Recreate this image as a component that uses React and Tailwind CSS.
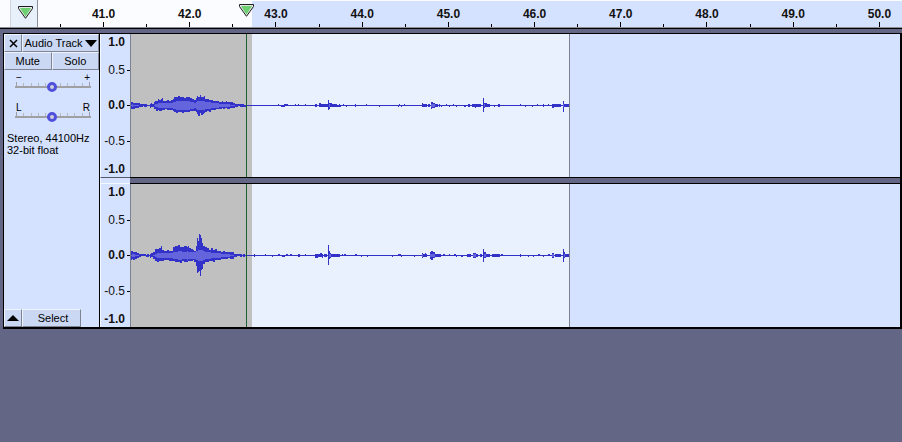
import React, { useState } from "react";

const SECONDS = [41, 42, 43, 44, 45, 46, 47, 48, 49, 50];

// [x, peak up, peak down, rms], each entry holds until the next one
const LEFT_ENVELOPE = [
  [0, 3, 3, 1], [1, 3, 3, 2], [2, 2, 3, 1], [4, 2, 2, 1], [8, 2, 1, 0], [9, 1, 1, 0],
  [12, 1, 0, 0], [13, 1, 1, 0], [16, 0, 0, 0], [19, 1, 2, 0], [20, 2, 1, 0], [21, 1, 1, 0],
  [23, 3, 3, 1], [24, 4, 3, 2], [25, 4, 5, 2], [27, 6, 4, 3], [28, 5, 5, 3], [30, 6, 5, 3],
  [31, 7, 4, 3], [32, 4, 4, 3], [34, 4, 3, 3], [36, 5, 4, 3], [38, 4, 4, 3], [40, 5, 4, 3],
  [42, 6, 5, 4], [43, 8, 6, 4], [45, 8, 7, 5], [47, 9, 6, 5], [49, 8, 6, 5], [51, 8, 7, 5],
  [53, 7, 6, 5], [55, 8, 6, 5], [59, 7, 5, 4], [61, 6, 5, 4], [63, 5, 5, 3], [65, 7, 6, 4],
  [66, 9, 8, 5], [67, 8, 10, 5], [69, 10, 7, 5], [70, 8, 9, 5], [72, 8, 8, 5], [73, 9, 7, 5],
  [74, 6, 6, 4], [76, 6, 5, 4], [78, 5, 6, 4], [80, 5, 4, 3], [82, 4, 4, 3], [85, 4, 3, 3],
  [88, 3, 3, 2], [91, 4, 2, 2], [92, 3, 3, 2], [94, 3, 2, 2], [95, 4, 2, 2], [96, 3, 3, 2],
  [99, 3, 2, 1], [102, 2, 2, 1], [104, 1, 1, 0], [107, 1, 0, 0], [109, 1, 1, 0], [113, 0, 1, 0],
  [115, 0, 0, 0],
];

const RIGHT_ENVELOPE = [
  [0, 4, 4, 1], [1, 4, 3, 2], [2, 3, 4, 2], [4, 3, 3, 1], [6, 2, 2, 1], [8, 1, 1, 0],
  [10, 1, 0, 0], [15, 0, 1, 0], [16, 1, 1, 0], [18, 0, 0, 0], [19, 1, 2, 0], [20, 2, 1, 0],
  [22, 3, 3, 1], [24, 6, 5, 2], [26, 6, 6, 3], [28, 7, 5, 3], [30, 9, 5, 3], [31, 5, 5, 3],
  [33, 4, 4, 3], [36, 5, 4, 3], [38, 4, 5, 3], [42, 8, 5, 4], [44, 9, 6, 4], [47, 10, 6, 5],
  [49, 8, 7, 5], [51, 8, 5, 4], [53, 9, 6, 4], [56, 8, 6, 5], [57, 9, 5, 4], [58, 7, 5, 4],
  [60, 6, 5, 4], [62, 5, 4, 4], [63, 4, 6, 4], [65, 9, 10, 5], [66, 17, 17, 5], [67, 14, 16, 6],
  [68, 21, 15, 6], [69, 20, 20, 6], [70, 17, 14, 6], [71, 12, 13, 6], [72, 9, 8, 5], [74, 8, 6, 4],
  [76, 7, 6, 4], [78, 5, 5, 4], [80, 7, 5, 3], [82, 5, 6, 3], [84, 6, 4, 3], [86, 4, 4, 3],
  [90, 3, 3, 2], [92, 4, 3, 2], [94, 3, 3, 2], [97, 3, 2, 2], [99, 3, 3, 1], [103, 1, 1, 0],
  [106, 1, 0, 0], [109, 1, 1, 0], [111, 0, 0, 0], [112, 1, 1, 0], [114, 0, 0, 0],
];

// [x, width, up, down]
const LEFT_BLIPS = [
  [147, 1, 1, 0], [150, 4, 0, 1], [153, 4, 1, 0], [164, 1, 1, 0], [167, 1, 1, 0], [174, 1, 1, 0],
  [184, 2, 1, 1], [188, 2, 2, 1], [190, 7, 1, 1], [195, 2, 1, 1], [197, 1, 5, 4], [198, 1, 2, 3],
  [199, 2, 2, 1], [201, 5, 1, 1], [206, 4, 0, 1], [208, 1, 1, 1], [212, 1, 1, 0], [215, 1, 0, 1],
  [224, 1, 1, 1], [235, 1, 1, 0], [248, 1, 0, 1], [267, 1, 0, 1], [268, 1, 1, 0], [270, 1, 0, 1],
  [273, 1, 1, 0], [291, 1, 2, 1], [292, 4, 1, 1], [297, 2, 1, 1], [300, 1, 3, 3], [301, 1, 3, 2],
  [302, 2, 2, 2], [304, 3, 1, 1], [308, 1, 1, 1], [310, 1, 0, 1], [315, 1, 1, 0], [318, 1, 0, 1],
  [322, 1, 1, 0], [325, 1, 0, 1], [333, 2, 0, 1], [337, 2, 1, 1], [341, 9, 1, 1], [344, 1, 1, 2],
  [352, 1, 7, 6], [353, 1, 2, 2], [354, 2, 2, 1], [356, 3, 1, 1], [363, 1, 0, 1], [367, 2, 1, 1],
  [389, 1, 1, 0], [394, 1, 0, 1], [401, 1, 0, 1], [406, 1, 1, 0], [412, 1, 1, 1], [417, 1, 1, 0],
  [421, 2, 1, 2], [423, 7, 1, 1], [432, 1, 4, 6], [433, 5, 1, 1],
];

const RIGHT_BLIPS = [
  [123, 1, 1, 1], [134, 1, 1, 0], [141, 1, 0, 1], [147, 2, 1, 0], [151, 3, 0, 1], [155, 2, 1, 0],
  [159, 2, 1, 0], [167, 2, 1, 1], [174, 1, 1, 0], [184, 3, 1, 2], [187, 2, 1, 1], [189, 2, 2, 1],
  [191, 1, 1, 2], [193, 3, 1, 1], [197, 1, 10, 9], [198, 1, 4, 3], [199, 1, 2, 2], [200, 9, 1, 1],
  [211, 1, 1, 0], [213, 2, 1, 0], [224, 2, 1, 0], [230, 1, 0, 1], [236, 1, 0, 1], [261, 1, 0, 1],
  [267, 3, 1, 0], [270, 1, 0, 1], [283, 1, 0, 1], [291, 1, 2, 2], [292, 4, 1, 1], [294, 1, 2, 1],
  [299, 1, 3, 3], [300, 2, 4, 4], [302, 2, 3, 2], [304, 6, 1, 1], [312, 2, 1, 0], [318, 1, 1, 0],
  [323, 2, 1, 0], [325, 1, 0, 1], [330, 2, 0, 1], [336, 4, 1, 1], [342, 3, 2, 2], [345, 2, 1, 1],
  [349, 2, 1, 1], [352, 1, 6, 6], [353, 2, 3, 2], [355, 4, 1, 1], [361, 8, 1, 1], [370, 2, 1, 0],
  [389, 1, 1, 1], [397, 1, 0, 1], [402, 1, 0, 1], [407, 2, 1, 0], [412, 1, 0, 1], [417, 2, 1, 0],
  [421, 2, 2, 2], [424, 6, 1, 1], [432, 1, 6, 6], [433, 1, 3, 2], [434, 4, 1, 1],
];

const RULER_LABELS = [
  { text: "1.0", style: "font-bold", tick: "bg-transparent" },
  { text: "0.5", style: "mt-3", tick: "bg-black" },
  { text: "0.0", style: "font-bold mt-[19px]", tick: "bg-black" },
  { text: "-0.5", style: "mt-5", tick: "bg-black" },
  { text: "-1.0", style: "font-bold mt-3", tick: "bg-transparent" },
];

const BEVEL =
  "bg-[#cbd8f4] border border-t-[#eef4ff] border-l-[#eef4ff] border-r-[#7f8494] border-b-[#7f8494] flex items-center justify-center text-[11px] leading-none text-black";

function Marker() {
  return (
    <svg width="15" height="13" viewBox="0 0 15 13" className="block">
      <path
        d="M0.5 0.5H14.5V2.5L7.5 12.3L0.5 2.5Z"
        fill="#e4e8e4"
        stroke="#1c1c1c"
      />
      <path d="M2 2H13L7.5 10.5Z" fill="#6cd070" />
    </svg>
  );
}

function TimeRuler() {
  return (
    <header className="relative flex h-[29px] overflow-hidden border-b border-black bg-[#d5e2ff]">
      <div className="flex w-[252px] shrink-0 border-b border-[#8c8f98] bg-[#fafcff]">
        <button
          type="button"
          aria-label="Pinned play head"
          className="ml-[10px] flex w-7 justify-center border-x border-l-[#d0d4dc] border-r-[#8c8f98] bg-[#e8f1fb] pt-[6px] pl-[2px]"
        >
          <Marker />
        </button>
      </div>
      <div className="grow border-t border-b border-t-[#fafcff] border-b-[#8c8f98]" />

      {/* the scale and the play head lie over the selected range */}
      <div className="absolute top-0 left-[60px] grid h-[27px] w-[862px] grid-cols-10">
        {SECONDS.map((second) => (
          <div key={second} className="flex items-end">
            <span className="h-[3px] w-px bg-black" />
            <div className="flex grow flex-col items-center">
              <span className="text-xs leading-4 font-bold text-[#111]">
                {second}.0
              </span>
              <span className="h-[5px] w-px bg-black" />
            </div>
          </div>
        ))}
      </div>
      <div className="absolute top-1 left-[239px]">
        <Marker />
      </div>
    </header>
  );
}

function TrackSlider({ label, left, right }) {
  const [value, setValue] = useState(49);

  return (
    <div className="pr-2 pl-[11px]">
      <div className="flex h-[10px] justify-between px-px text-[10px] leading-3 text-black">
        <span>{left}</span>
        <span>{right}</span>
      </div>
      <div className="-mb-1 flex h-1 items-end justify-between px-px">
        {[4, 2, 2, 2, 2, 4, 2, 2, 2, 2, 4].map((height, i) => (
          <span
            key={i}
            className={
              height === 4 ? "h-1 w-px bg-[#9a9da6]" : "h-[3px] w-px bg-[#b4b8c2]"
            }
          />
        ))}
      </div>
      <input
        type="range"
        aria-label={label}
        min="0"
        max="100"
        value={value}
        onChange={(e) => setValue(e.target.value)}
        className="relative block h-[9px] w-full appearance-none bg-transparent [&::-webkit-slider-runnable-track]:h-[2px] [&::-webkit-slider-runnable-track]:bg-[#a0a0a4] [&::-webkit-slider-thumb]:-mt-1 [&::-webkit-slider-thumb]:size-[10px] [&::-webkit-slider-thumb]:appearance-none [&::-webkit-slider-thumb]:rounded-full [&::-webkit-slider-thumb]:border-[3px] [&::-webkit-slider-thumb]:border-[#5050dc] [&::-webkit-slider-thumb]:bg-[#d0d0d8]"
      />
    </div>
  );
}

function TrackPanel() {
  return (
    <aside className="flex w-24 shrink-0 flex-col border-r border-black bg-[#d5e2ff]">
      <div className="flex h-[18px]">
        <button
          type="button"
          aria-label="Close track"
          className={`${BEVEL} w-[18px]`}
        >
          <svg width="9" height="9" viewBox="0 0 9 9">
            <path d="M1 1L8 8M8 1L1 8" stroke="#000" strokeWidth="1.5" />
          </svg>
        </button>
        <button type="button" className={`${BEVEL} grow gap-[2px]`}>
          Audio Track
          <svg width="12" height="7" viewBox="0 0 12 7">
            <path d="M0 0H12L6 7Z" />
          </svg>
        </button>
      </div>
      <div className="flex h-[18px]">
        <button type="button" className={`${BEVEL} flex-1`}>
          Mute
        </button>
        <button type="button" className={`${BEVEL} flex-1`}>
          Solo
        </button>
      </div>

      <div className="mt-[2px] flex flex-col gap-[11px]">
        <TrackSlider label="Gain" left="−" right="+" />
        <TrackSlider label="Pan" left="L" right="R" />
      </div>

      <p className="mt-[11px] pl-[3px] text-[11px] leading-3 whitespace-nowrap text-black">
        Stereo, 44100Hz
        <br />
        32-bit float
      </p>

      <div className="mt-auto flex h-[18px]">
        <button
          type="button"
          aria-label="Collapse track"
          className={`${BEVEL} w-[18px]`}
        >
          <svg width="12" height="6" viewBox="0 0 12 6">
            <path d="M0 6H12L6 0Z" />
          </svg>
        </button>
        <button type="button" className={`${BEVEL} w-[59px] pl-[3px]`}>
          Select
        </button>
      </div>
    </aside>
  );
}

function LevelRuler({ last }) {
  return (
    <div className="flex h-[143px] w-[30px] shrink-0 flex-col border-l border-[#f4f8ff] bg-[#d5e2ff]">
      {RULER_LABELS.map((label) => (
        <div
          key={label.text}
          className={`${label.style} flex h-4 items-center justify-end gap-[2px] text-xs leading-4 text-[#111]`}
        >
          {label.text}
          <span className={`${label.tick} h-px w-[3px]`} />
        </div>
      ))}
      {last ? <span className="mt-auto h-px w-[5px] self-end bg-black" /> : null}
    </div>
  );
}

function Waveform({ envelope, blips }) {
  const zero = 71;
  let peaks = `M0 ${zero}H438V${zero + 1}H0Z`;
  let rms = "";

  envelope.forEach(([x, up, down, inner], i) => {
    const end = i + 1 < envelope.length ? envelope[i + 1][0] : x + 1;
    peaks += `M${x} ${zero - up}H${end}V${zero + down + 1}H${x}Z`;
    if (inner > 0) {
      rms += `M${x} ${zero - inner + 1}H${end}V${zero + inner}H${x}Z`;
    }
  });

  blips.forEach(([x, width, up, down]) => {
    peaks += `M${x} ${zero - up}h${width}V${zero + down + 1}h${-width}Z`;
    if (up > 1 && up < 5 && down > 1) {
      rms += `M${x} ${zero - 1}h${width}v3h${-width}Z`;
    }
  });

  return (
    <svg
      viewBox="0 0 438 143"
      className="block h-[143px] w-[438px]"
      shapeRendering="crispEdges"
    >
      <rect width="121" height="143" fill="#c0c0c0" />
      <path d={peaks} fill="#3232c8" />
      <path d={rms} fill="#6464dc" />
      <rect x="115" width="1" height="143" fill="#1f6030" />
    </svg>
  );
}

function Channel({ envelope, blips, last }) {
  return (
    <div className="flex">
      <LevelRuler last={last} />
      <div className="flex grow bg-[#d5e2ff]">
        <div className="shrink-0 border-x border-[#7c8090] bg-[#e9f1ff]">
          <Waveform envelope={envelope} blips={blips} />
        </div>
      </div>
    </div>
  );
}

function App() {
  return (
    <div className="min-h-screen bg-[#636684] font-['Liberation_Sans',Arial,sans-serif]">
      <TimeRuler />
      <main className="mt-1 ml-[3px] flex border-t border-r-2 border-b-2 border-l border-black">
        <TrackPanel />
        <section className="min-w-0 grow">
          <Channel envelope={LEFT_ENVELOPE} blips={LEFT_BLIPS} />
          <div className="flex h-[7px]">
            <div className="w-[30px] border-t border-b border-l border-t-[#55596c] border-b-[#f4f8ff] border-l-[#f4f8ff] bg-[#d5e2ff]" />
            <div className="grow border-y border-black bg-[#636684]" />
          </div>
          <Channel envelope={RIGHT_ENVELOPE} blips={RIGHT_BLIPS} last />
        </section>
      </main>
    </div>
  );
}

export default App;
